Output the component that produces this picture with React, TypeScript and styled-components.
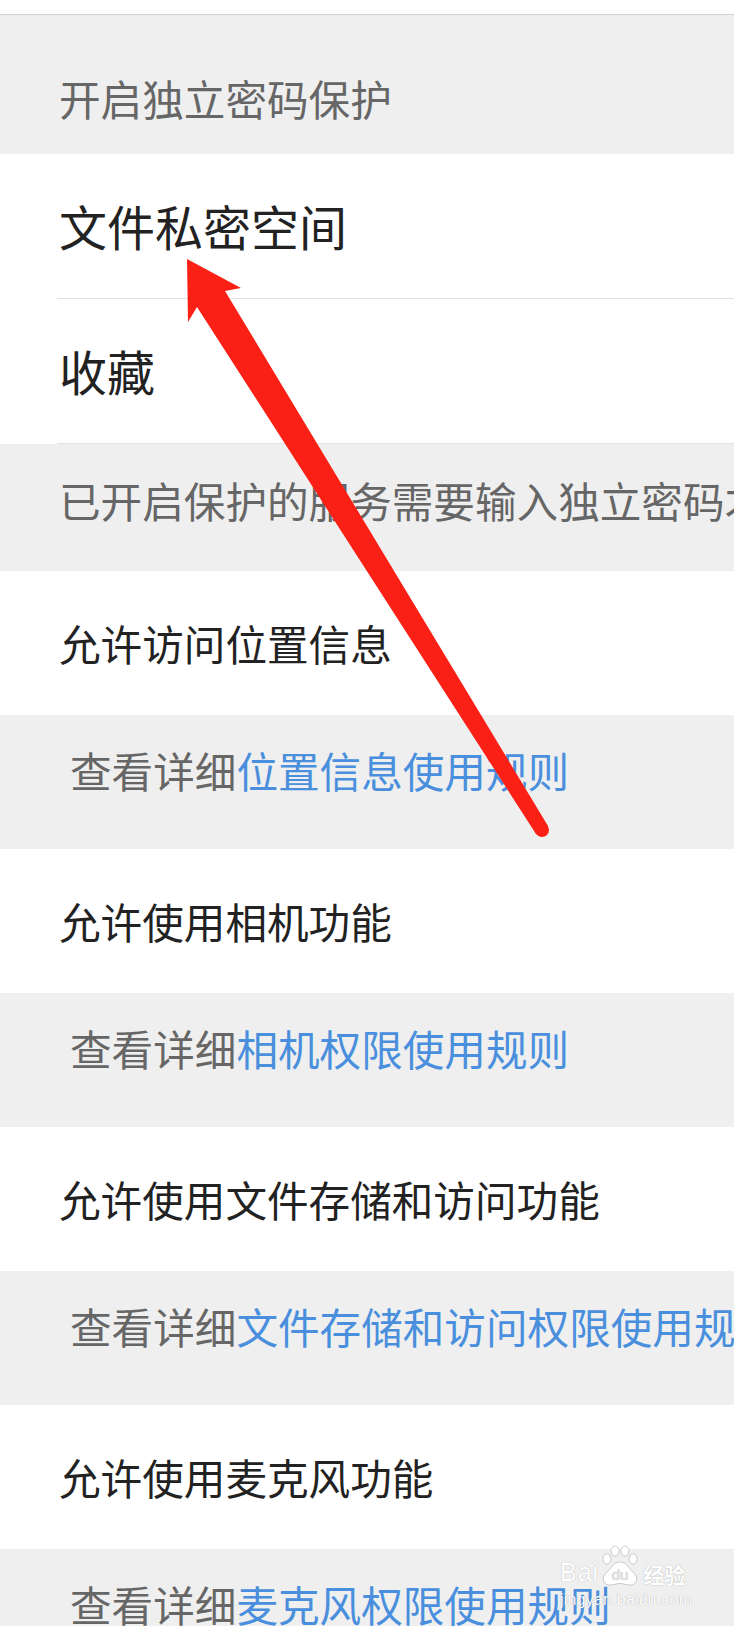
import React from "react";
import styled, {createGlobalStyle} from "styled-components";

const white = "#ffffff";
const pageGrey = "#efefef";
const textDark = "#222222";
const textGrey = "#666666";
const linkBlue = "#4a8fdd";
const arrowRed = "#fb2016";

const GlobalStyle = createGlobalStyle`
html, body {
  margin: 0;
  padding: 0;
  background: ${pageGrey};
}
body {
  width: 734px;
  height: 1626px;
  overflow: hidden;
  font-family: "Noto Sans CJK SC", "Noto Sans", sans-serif;
}
`;

const Page = styled.div`
position: relative;
width: 734px;
height: 1626px;
overflow: hidden;
background: ${pageGrey};
`;

const TopStrip = styled.div`
height: 14px;
background: ${white};
border-bottom: 1px solid #d2d2d2;
`;

// shift moves the text's line box down (+) or up (-) from the row centre
const Band = styled.div<{$h: number; $shift: number; $bg: string; $indent: number}>`
display: flex;
align-items: center;
box-sizing: border-box;
height: ${(p) => p.$h}px;
padding-left: ${(p) => p.$indent}px;
padding-top: ${(p) => (p.$shift > 0 ? p.$shift * 2 : 0)}px;
padding-bottom: ${(p) => (p.$shift < 0 ? -p.$shift * 2 : 0)}px;
background: ${(p) => p.$bg};
overflow: hidden;
`;

const WhiteGroup = styled.div`
background: ${white};
`;

const ListItem = styled.div`
display: flex;
align-items: center;
box-sizing: border-box;
height: 145px;
margin-left: 57px;
padding-left: 2px;
padding-bottom: 2px;
border-bottom: 1px solid #e2e2e2;
`;

const Label = styled.span<{$size: number; $color: string}>`
font-size: ${(p) => p.$size}px;
line-height: 1;
color: ${(p) => p.$color};
white-space: nowrap;
`;

const Link = styled.span`
color: ${linkBlue};
`;

const Overlay = styled.svg`
position: absolute;
left: 0;
top: 0;
pointer-events: none;
`;

const Watermark = styled.div`
position: absolute;
left: 560px;
top: 1545px;
width: 150px;
display: flex;
flex-direction: column;
color: ${white};
font-family: "Liberation Sans", Arial, sans-serif;
text-shadow: 0 0 1px rgba(0, 0, 0, 0.35);
pointer-events: none;
`;

const MarkTop = styled.div`
display: flex;
align-items: flex-end;
height: 42px;
`;

const MarkWord = styled.span`
font-size: 25px;
line-height: 1;
letter-spacing: 1px;
margin-bottom: 2px;
`;

const MarkCn = styled.span`
font-family: "Noto Sans CJK SC", sans-serif;
font-size: 21px;
font-weight: 700;
line-height: 1;
margin-bottom: 2px;
margin-left: 2px;
`;

const MarkUrl = styled.span`
font-size: 16px;
line-height: 1;
margin-top: 5px;
letter-spacing: 0.2px;
`;

const Paw = () => (
  <svg width="42" height="42" viewBox="0 0 42 42">
    <g fill="#fff" stroke="rgba(0,0,0,0.18)" strokeWidth="1">
      <ellipse cx="8" cy="14" rx="4" ry="5" />
      <ellipse cx="16" cy="6" rx="4" ry="5" />
      <ellipse cx="26" cy="6" rx="4" ry="5" />
      <ellipse cx="34" cy="14" rx="4" ry="5" />
      <path d="M21 17 C14 17 12 24 7 28 C2 32 4 41 12 40 C16 39.5 18 38.5 21 38.5 C24 38.5 26 39.5 30 40 C38 41 40 32 35 28 C30 24 28 17 21 17 Z" />
    </g>
    <text x="21" y="35" textAnchor="middle" fontFamily="Liberation Sans, Arial, sans-serif" fontSize="15" fill="#e4e4e4">du</text>
  </svg>
);

const Arrow = () => (
  <Overlay width="734" height="1626" viewBox="0 0 734 1626">
    <polygon
      fill={arrowRed}
      points="187,259 241,288 225,291 548,826 536,834 197,307 188,322"
    />
    <circle cx="542" cy="830" r="7" fill={arrowRed} />
  </Overlay>
);

const permissions = [
  {title: "允许访问位置信息", link: "位置信息使用规则", white: 144, grey: 134},
  {title: "允许使用相机功能", link: "相机权限使用规则", white: 144, grey: 134},
  {title: "允许使用文件存储和访问功能", link: "文件存储和访问权限使用规则", white: 144, grey: 134},
  {title: "允许使用麦克风功能", link: "麦克风权限使用规则", white: 144, grey: 134},
];

const App = () => {
  return (
    <Page>
      <GlobalStyle />
      <TopStrip />
      <Band $h={139} $shift={14} $bg={pageGrey} $indent={59}>
        <Label $size={41.6} $color={textGrey}>开启独立密码保护</Label>
      </Band>
      <WhiteGroup>
        <ListItem>
          <Label $size={48} $color={textDark}>文件私密空间</Label>
        </ListItem>
        <ListItem>
          <Label $size={48} $color={textDark}>收藏</Label>
        </ListItem>
      </WhiteGroup>
      <Band $h={127} $shift={-7} $bg={pageGrey} $indent={59}>
        <Label $size={41.6} $color={textGrey}>已开启保护的服务需要输入独立密码才能访问</Label>
      </Band>
      {permissions.map((p) => (
        <React.Fragment key={p.title}>
          <Band $h={p.white} $shift={1} $bg={white} $indent={59}>
            <Label $size={41.6} $color={textDark}>{p.title}</Label>
          </Band>
          <Band $h={p.grey} $shift={-11} $bg={pageGrey} $indent={70}>
            <Label $size={41.6} $color={textGrey}>
              查看详细<Link>{p.link}</Link>
            </Label>
          </Band>
        </React.Fragment>
      ))}
      <Arrow />
      <Watermark>
        <MarkTop>
          <MarkWord>Bai</MarkWord>
          <Paw />
          <MarkCn>经验</MarkCn>
        </MarkTop>
        <MarkUrl>jingyan.baidu.com</MarkUrl>
      </Watermark>
    </Page>
  );
};

export default App;
